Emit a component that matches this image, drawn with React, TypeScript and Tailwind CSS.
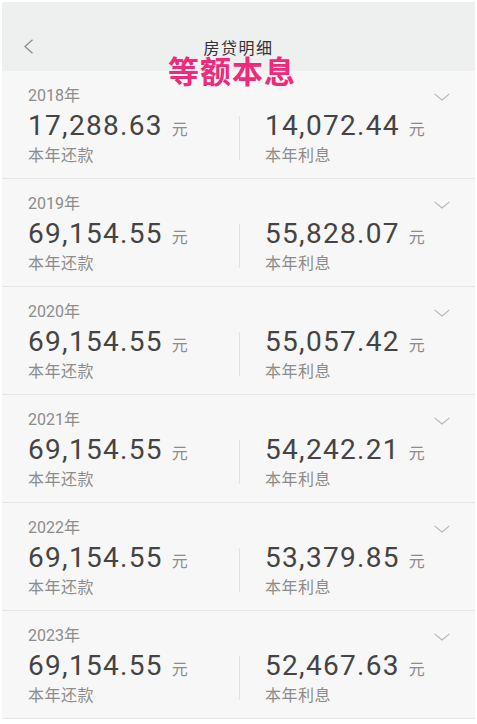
import React from "react";

const rows = [
  { year: "2018年", pay: "17,288.63", interest: "14,072.44" },
  { year: "2019年", pay: "69,154.55", interest: "55,828.07" },
  { year: "2020年", pay: "69,154.55", interest: "55,057.42" },
  { year: "2021年", pay: "69,154.55", interest: "54,242.21" },
  { year: "2022年", pay: "69,154.55", interest: "53,379.85" },
  { year: "2023年", pay: "69,154.55", interest: "52,467.63" },
];

const font = { fontFamily: "Roboto, 'Noto Sans CJK SC', sans-serif" };

function Chevron() {
  return (
    <svg width="16" height="8" viewBox="0 0 16 8" fill="none" className="mt-[2px]">
      <path d="M0.5 0.8 L8 7 L15.5 0.8" stroke="#b5b5b5" strokeWidth="1.1" />
    </svg>
  );
}

function Amount({ value, label }: { value: string; label: string }) {
  return (
    <div className="flex flex-col">
      <div className="flex items-baseline mt-[4px]">
        <span className="text-[28px] leading-[32px] tracking-[1.3px] text-[#444444]">{value}</span>
        <span className="ml-[9px] text-[16px] text-[#8c8c8c]">元</span>
      </div>
      <span className="mt-[4px] text-[16px] leading-[20px] tracking-[0.5px] text-[#8c8c8c]">{label}</span>
    </div>
  );
}

export default function App() {
  return (
    <div className="min-h-screen bg-white pt-[2px] pl-[2px]" style={font}>
      <div className="relative w-[473px]">
        {/* Header */}
        <div className="h-[69px] bg-[#eeefef] flex items-center justify-center relative">
          <svg
            width="11"
            height="15"
            viewBox="0 0 11 15"
            fill="none"
            className="absolute left-[21px] top-[37px]"
          >
            <path d="M9.5 0.8 L2 7.5 L9.5 14.2" stroke="#8d8d8d" strokeWidth="1.3" />
          </svg>
          <span className="mt-[24px] text-[16px] leading-[16px] tracking-[1.5px] text-[#333]">房贷明细</span>
        </div>

        {/* Pink annotation overlay */}
        <span className="absolute left-[166px] top-[57px] text-[31px] leading-[28px] font-bold tracking-[1px] text-[#ef2a7b]">
          等额本息
        </span>

        {rows.map((r) => (
          <div key={r.year} className="h-[108px] bg-[#f7f7f7] border-b border-[#e6e6e6] pt-[15px] pl-[26px] pr-[25px]">
            <div className="flex items-center justify-between">
              <span className="text-[16px] leading-[20px] text-[#8c8c8c]">{r.year}</span>
              <Chevron />
            </div>
            <div className="flex">
              <div className="w-[211px]">
                <Amount value={r.pay} label="本年还款" />
              </div>
              <div className="w-px h-[44px] bg-[#e2e2e2] self-center mt-[4px]" />
              <div className="pl-[25px]">
                <Amount value={r.interest} label="本年利息" />
              </div>
            </div>
          </div>
        ))}
      </div>
    </div>
  );
}
